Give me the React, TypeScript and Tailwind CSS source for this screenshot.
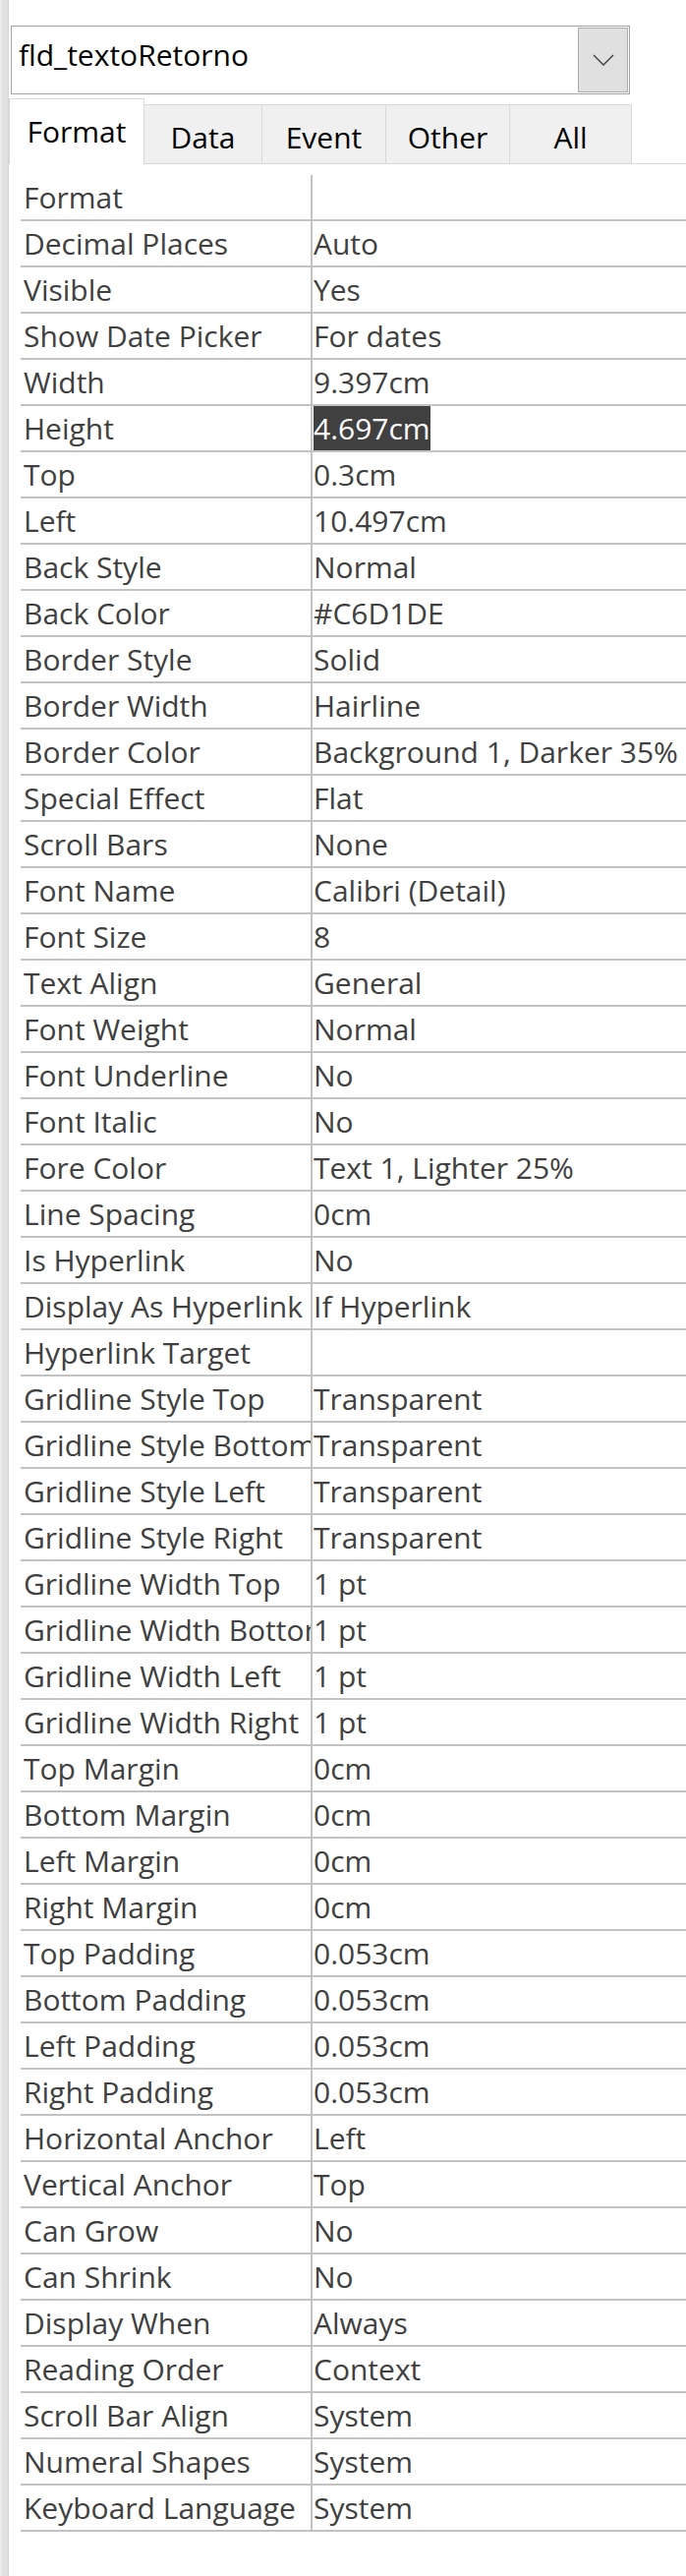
import React from "react";

const rows: [string, string][] = [
  ["Format", ""],
  ["Decimal Places", "Auto"],
  ["Visible", "Yes"],
  ["Show Date Picker", "For dates"],
  ["Width", "9.397cm"],
  ["Height", "4.697cm"],
  ["Top", "0.3cm"],
  ["Left", "10.497cm"],
  ["Back Style", "Normal"],
  ["Back Color", "#C6D1DE"],
  ["Border Style", "Solid"],
  ["Border Width", "Hairline"],
  ["Border Color", "Background 1, Darker 35%"],
  ["Special Effect", "Flat"],
  ["Scroll Bars", "None"],
  ["Font Name", "Calibri (Detail)"],
  ["Font Size", "8"],
  ["Text Align", "General"],
  ["Font Weight", "Normal"],
  ["Font Underline", "No"],
  ["Font Italic", "No"],
  ["Fore Color", "Text 1, Lighter 25%"],
  ["Line Spacing", "0cm"],
  ["Is Hyperlink", "No"],
  ["Display As Hyperlink", "If Hyperlink"],
  ["Hyperlink Target", ""],
  ["Gridline Style Top", "Transparent"],
  ["Gridline Style Bottom", "Transparent"],
  ["Gridline Style Left", "Transparent"],
  ["Gridline Style Right", "Transparent"],
  ["Gridline Width Top", "1 pt"],
  ["Gridline Width Bottom", "1 pt"],
  ["Gridline Width Left", "1 pt"],
  ["Gridline Width Right", "1 pt"],
  ["Top Margin", "0cm"],
  ["Bottom Margin", "0cm"],
  ["Left Margin", "0cm"],
  ["Right Margin", "0cm"],
  ["Top Padding", "0.053cm"],
  ["Bottom Padding", "0.053cm"],
  ["Left Padding", "0.053cm"],
  ["Right Padding", "0.053cm"],
  ["Horizontal Anchor", "Left"],
  ["Vertical Anchor", "Top"],
  ["Can Grow", "No"],
  ["Can Shrink", "No"],
  ["Display When", "Always"],
  ["Reading Order", "Context"],
  ["Scroll Bar Align", "System"],
  ["Numeral Shapes", "System"],
  ["Keyboard Language", "System"],
];

export default function App() {
  return (
    <div
      className="flex w-[698px] h-[2620px] bg-white overflow-hidden text-[30px]"
      style={{ fontFamily: '"Open Sans", "Noto Sans", sans-serif' }}
    >
      {/* left strip */}
      <div className="flex w-[9px] shrink-0 h-full border-r border-[#d6d6d6]">
        <div className="w-[2px] bg-[#ebebeb]" />
        <div className="w-[6px] bg-[#e1e1e1]" />
      </div>

      <div className="flex flex-col flex-1 min-w-0">
        {/* combo */}
        <div className="mt-[26px] ml-[2px] w-[630px] h-[70px] border border-[#a3a3a3] flex items-stretch p-[1px]">
          <div className="flex-1 pl-[6px] pt-[5px] leading-[45px] text-black whitespace-nowrap">
            fld_textoRetorno
          </div>
          <div className="w-[51px] bg-[#e0e0e0] border border-[#acacac] flex items-center justify-center">
            <svg width="22" height="12" viewBox="0 0 22 12">
              <polyline points="1,1 11,11 21,1" fill="none" stroke="#3a3a3a" strokeWidth="1.3" />
            </svg>
          </div>
        </div>

        {/* tabs */}
        <div className="mt-[4px] flex items-end h-[67px]">
          <div className="w-[138px] h-[67px] border-l border-t border-r border-[#d9d9d9] bg-white text-center pt-[10px] leading-[45px] text-black">
            Format
          </div>
          <div className="w-[120px] h-[61px] border-t border-r border-b border-[#d9d9d9] bg-[#f0f0f0] text-center pt-[10px] leading-[45px] text-black">
            Data
          </div>
          <div className="w-[126px] h-[61px] border-t border-r border-b border-[#d9d9d9] bg-[#f0f0f0] text-center pt-[10px] leading-[45px] text-black">
            Event
          </div>
          <div className="w-[126px] h-[61px] border-t border-r border-b border-[#d9d9d9] bg-[#f0f0f0] text-center pt-[10px] leading-[45px] text-black">
            Other
          </div>
          <div className="w-[124px] h-[61px] border-t border-r border-b border-[#d9d9d9] bg-[#f0f0f0] text-center pt-[10px] leading-[45px] text-black">
            All
          </div>
          <div className="flex-1 h-[61px] border-b border-[#d9d9d9]" />
        </div>

        {/* property grid */}
        <div className="mt-[11px] ml-[12px] flex flex-col text-[#404040]">
          {rows.map(([label, value]) => (
            <div key={label} className="flex h-[47px] border-b-2 border-[#c2c2c2]">
              <div className="w-[297px] shrink-0 border-r-2 border-[#c2c2c2] pl-[3px] leading-[45px] whitespace-nowrap overflow-hidden">
                {label}
              </div>
              <div className="flex-1 min-w-0 pl-[1px] leading-[45px] whitespace-nowrap overflow-hidden">
                {label === "Height" ? (
                  <span className="inline-block bg-[#404040] text-white h-[45px]">{value}</span>
                ) : (
                  value
                )}
              </div>
            </div>
          ))}
        </div>
      </div>
    </div>
  );
}
